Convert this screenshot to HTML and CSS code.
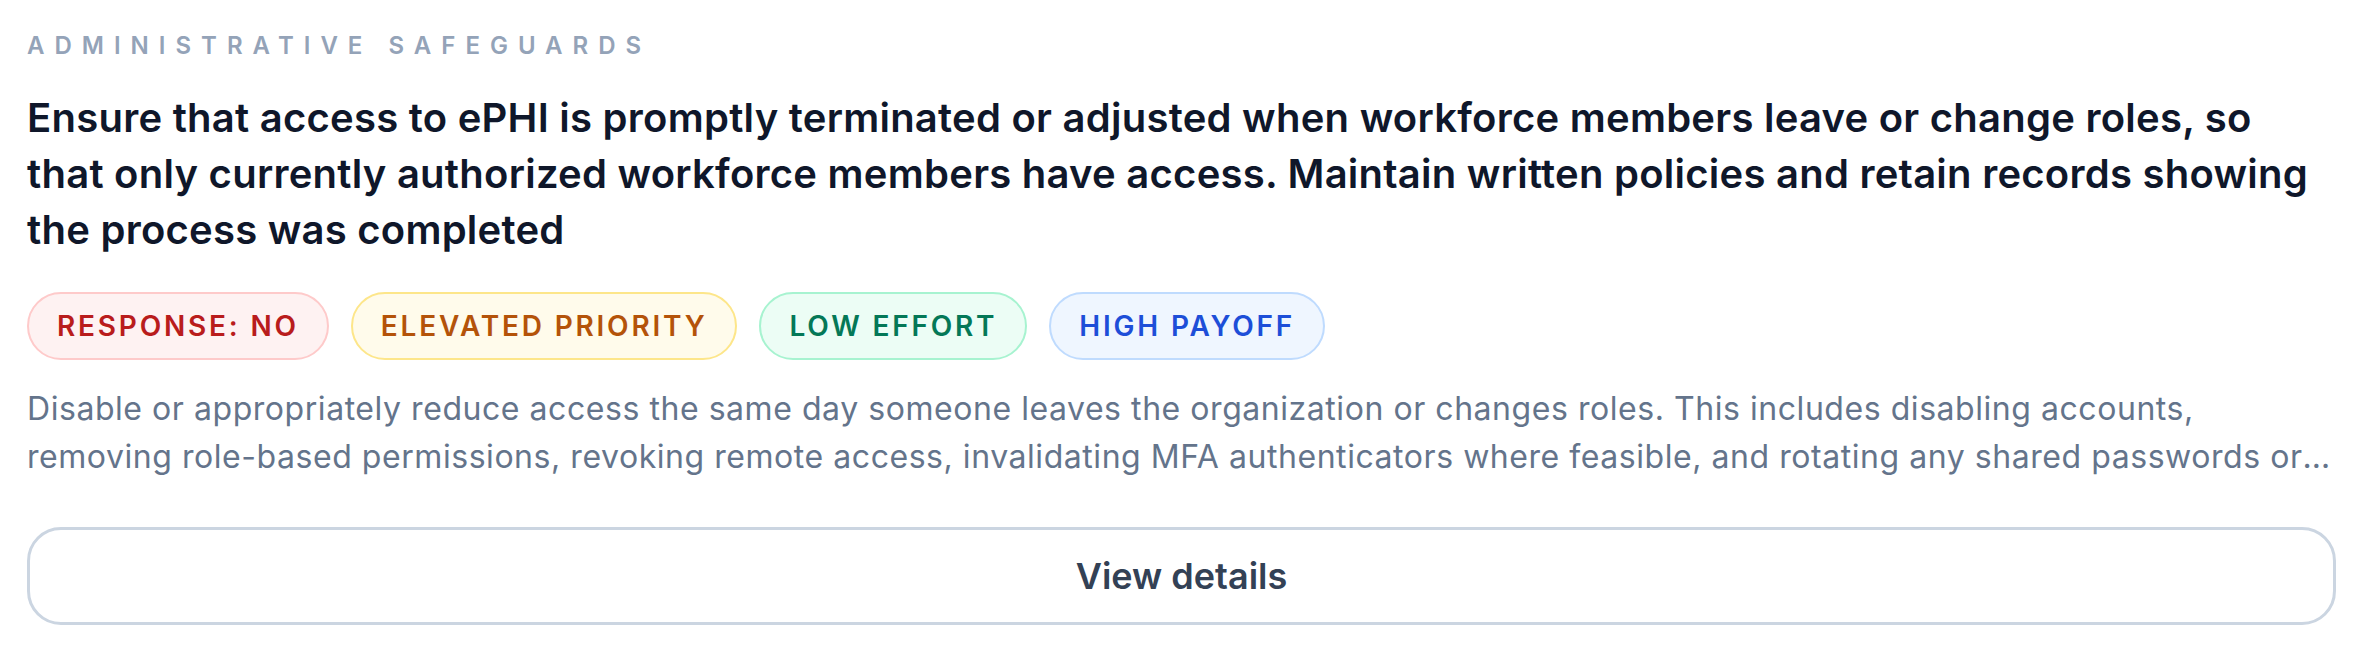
FILE: index.html
```html
<!DOCTYPE html>
<html lang="en">
<head>
<meta charset="utf-8">
<title>Safeguard</title>
<link rel="stylesheet" href="styles.css">
</head>
<body>
<article class="card">
  <div class="eyebrow">Administrative Safeguards</div>
  <h2 class="title">Ensure that access to ePHI is promptly terminated or adjusted when workforce members leave or change roles, so that only currently authorized workforce members have access. Maintain written policies and retain records showing the process was completed</h2>
  <div class="badges">
    <span class="badge badge-red">Response: No</span>
    <span class="badge badge-amber">Elevated priority</span>
    <span class="badge badge-green">Low effort</span>
    <span class="badge badge-blue">High payoff</span>
  </div>
  <p class="desc">Disable or appropriately reduce access the same day someone leaves the organization or changes roles. This includes disabling accounts, removing role-based permissions, revoking remote access, invalidating MFA authenticators where feasible, and rotating any shared passwords or credentials the individual knew, then documenting each step in the termination checklist.</p>
  <button class="details-btn" type="button">View details</button>
</article>
</body>
</html>
```
FILE: styles.css
```css
* { box-sizing: border-box; }
html, body { margin: 0; padding: 0; background: #ffffff; }
body {
  font-family: Inter, "Noto Sans", "Liberation Sans", sans-serif;
  -webkit-font-smoothing: antialiased;
}
.card {
  padding: 30px 28px 28px 27px;
  display: flex;
  flex-direction: column;
}
.eyebrow {
  font-size: 24px;
  line-height: 32px;
  font-weight: 600;
  letter-spacing: 10px;
  text-transform: uppercase;
  color: #94a3b8;
}
.title {
  margin: 28px 0 0;
  font-size: 40px;
  line-height: 56px;
  font-weight: 600;
  color: #0f172a;
  letter-spacing: 0.25px;
}
.badges {
  display: flex;
  flex-wrap: wrap;
  gap: 22px;
  margin-top: 34px;
}
.badge {
  display: inline-flex;
  align-items: center;
  height: 68px;
  padding: 0 28px;
  border: 2px solid;
  border-radius: 999px;
  font-size: 28px;
  font-weight: 600;
  letter-spacing: 0.1em;
  text-transform: uppercase;
}
.badge-red { background: #fef2f2; border-color: #fecaca; color: #b91c1c; }
.badge-amber { background: #fffbeb; border-color: #fde68a; color: #b45309; }
.badge-green { background: #ecfdf5; border-color: #a7f3d0; color: #047857; }
.badge-blue { background: #eff6ff; border-color: #bfdbfe; color: #1d4ed8; }
.desc {
  margin: 25px 0 0;
  font-size: 32px;
  line-height: 48px;
  letter-spacing: 0.55px;
  color: #64748b;
  display: -webkit-box;
  -webkit-line-clamp: 2;
  -webkit-box-orient: vertical;
  overflow: hidden;
}
.details-btn {
  margin-top: 46px;
  height: 98px;
  width: 100%;
  border: 3px solid #cbd5e1;
  border-radius: 34px;
  background: #ffffff;
  font-family: inherit;
  font-size: 36px;
  font-weight: 600;
  color: #334155;
}
```
